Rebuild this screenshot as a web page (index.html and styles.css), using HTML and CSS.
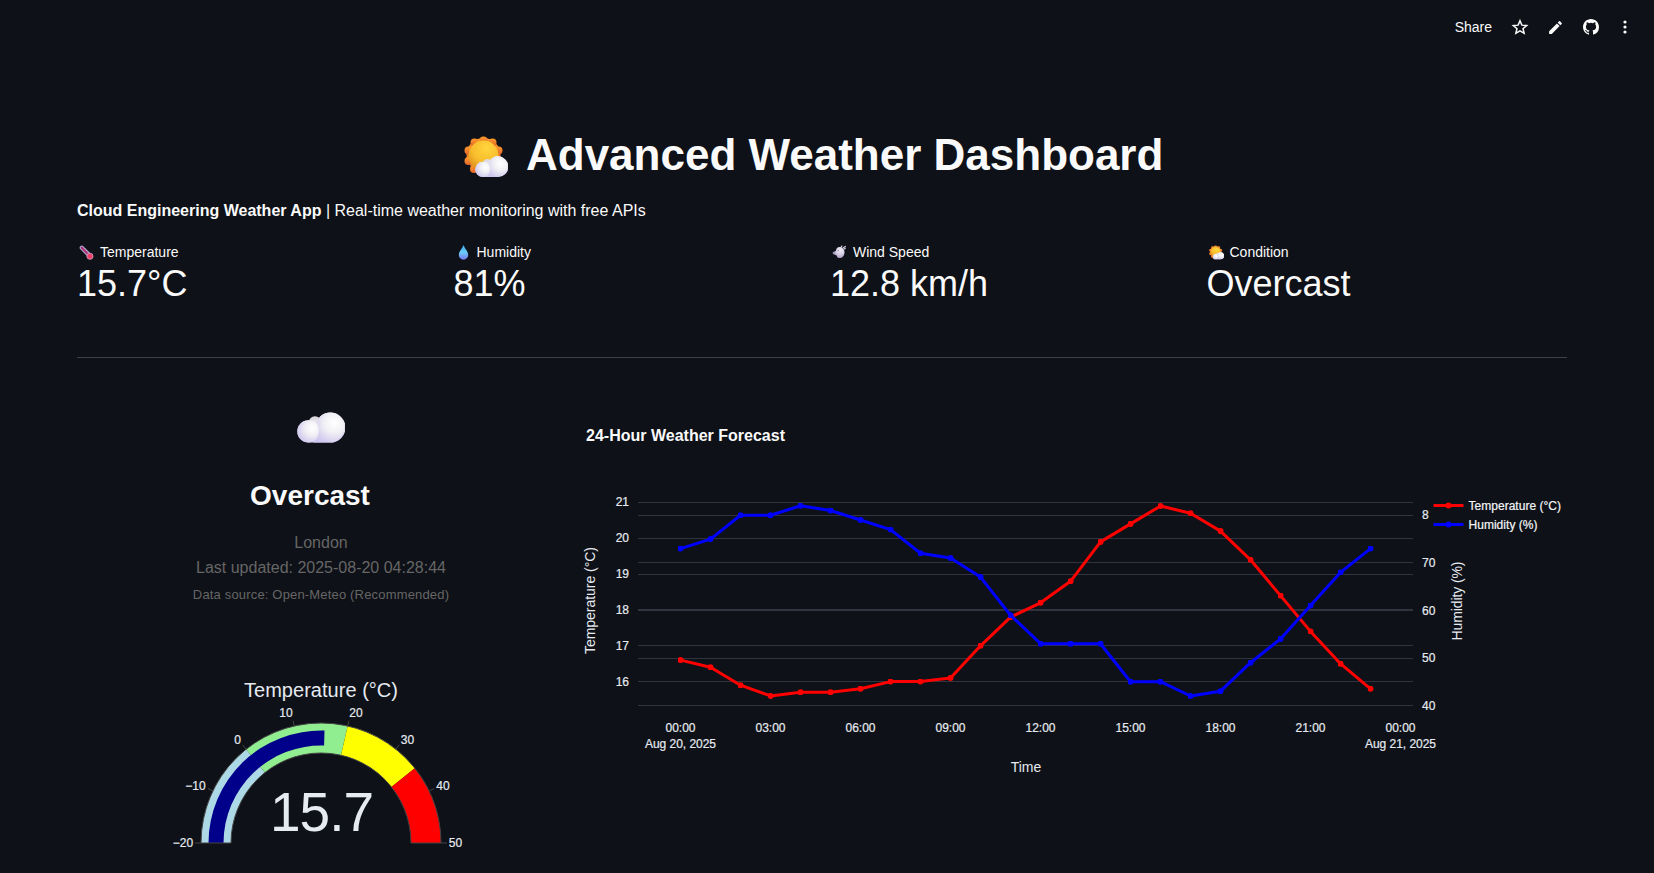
FILE: index.html
```html
<!DOCTYPE html>
<html lang="en">
<head>
<meta charset="utf-8">
<title>Advanced Weather Dashboard</title>
<link rel="stylesheet" href="styles.css">
</head>
<body>
<svg class="defs" width="0" height="0" aria-hidden="true">
  <defs>
    <radialGradient id="sun" cx=".6" cy=".25" r=".8"><stop offset="0" stop-color="#ffd53d"/><stop offset=".6" stop-color="#f8bc2c"/><stop offset="1" stop-color="#d98f1c"/></radialGradient>
    <linearGradient id="rays" x1="0" y1="0" x2="0" y2="1"><stop offset="0" stop-color="#ff9a2b"/><stop offset="1" stop-color="#e2652c"/></linearGradient>
    <linearGradient id="cloudBase" x1="0" y1="0" x2="0" y2="1"><stop offset="0" stop-color="#f4f3f5"/><stop offset=".5" stop-color="#dfdae9"/><stop offset="1" stop-color="#cdc3f2"/></linearGradient>
    <radialGradient id="puff" cx=".68" cy=".35" r=".72"><stop offset="0" stop-color="#ffffff"/><stop offset=".45" stop-color="#f1f0f4"/><stop offset="1" stop-color="#d0c7ee"/></radialGradient>
    <linearGradient id="drop" x1="0" y1="0" x2="0" y2="1"><stop offset="0" stop-color="#3aa5e8"/><stop offset=".5" stop-color="#6ccdf5"/><stop offset="1" stop-color="#7a77ee"/></linearGradient>
    <radialGradient id="wind" cx=".65" cy=".3" r=".8"><stop offset="0" stop-color="#f1edf6"/><stop offset=".5" stop-color="#d3cae0"/><stop offset="1" stop-color="#9b8cb4"/></radialGradient>
    <symbol id="cloud" viewBox="0 0 48 31">
      <circle cx="18" cy="10.500" r="6.200" fill="#dddbe0"/>
      <path d="M11.500 8.300a11 11 0 0 0 0 22.300h22a15 15 0 0 0 0-30.100c-6 0-10.500 3-13 7.500z" fill="url(#cloudBase)"/>
      <circle cx="11.500" cy="19.400" r="11.200" fill="url(#puff)"/>
      <path d="M20 10C22.500 4 27 .5 32.500.5a15 15 0 0 1 0 30.100H16c6-3 7-13 4-20.600z" fill="url(#puff)"/>
    </symbol>
    <symbol id="suncloud" viewBox="0 0 44 42">
      <g fill="url(#rays)"><circle cx="19.500" cy="19" r="17"/><circle cx="19.500" cy="4.500" r="4"/><circle cx="28.500" cy="6.500" r="4"/><circle cx="10.500" cy="6.500" r="4"/><circle cx="34.500" cy="14.500" r="4"/><circle cx="4.500" cy="14.500" r="4"/><circle cx="4.500" cy="25" r="4"/><circle cx="10" cy="33" r="4"/><circle cx="34.500" cy="24" r="4"/></g>
      <circle cx="19.500" cy="19.500" r="15" fill="url(#sun)"/>
      <g transform="translate(11 20) scale(.69)"><circle cx="18" cy="10.500" r="6.200" fill="#dddbe0"/><path d="M11.500 8.300a11 11 0 0 0 0 22.300h22a15 15 0 0 0 0-30.100c-6 0-10.500 3-13 7.500z" fill="url(#cloudBase)"/><circle cx="11.500" cy="19.400" r="11.200" fill="url(#puff)"/><path d="M20 10C22.500 4 27 .5 32.500.5a15 15 0 0 1 0 30.100H16c6-3 7-13 4-20.600z" fill="url(#puff)"/></g>
    </symbol>
  </defs>
</svg>

<header class="toolbar">
  <span class="share">Share</span>
  <svg class="tool star" viewBox="0 0 24 24"><path fill="none" stroke="#fafafa" stroke-width="2" d="M12 3.600l2.500 5.900 6.400.5-4.900 4.200 1.500 6.200-5.500-3.300-5.500 3.300L8 14.200 3.100 10l6.400-.5z"/></svg>
  <svg class="tool pencil" viewBox="0 0 24 24"><path fill="#fafafa" d="M3 17.250V21h3.750L17.810 9.940l-3.750-3.750L3 17.250zM20.710 7.040a1 1 0 0 0 0-1.410l-2.340-2.340a1 1 0 0 0-1.410 0l-1.830 1.830 3.750 3.750 1.830-1.830z"/></svg>
  <svg class="tool github" viewBox="0 0 16 16"><path fill="#fafafa" d="M8 0C3.580 0 0 3.580 0 8c0 3.540 2.290 6.530 5.470 7.590.4.070.55-.17.55-.38 0-.19-.01-.82-.01-1.490-2.010.37-2.530-.49-2.690-.94-.09-.23-.48-.94-.82-1.130-.28-.15-.68-.52-.01-.53.63-.01 1.080.58 1.230.82.72 1.210 1.870.87 2.330.66.07-.52.28-.87.51-1.070-1.780-.2-3.640-.89-3.640-3.950 0-.87.31-1.590.82-2.150-.08-.2-.36-1.020.08-2.120 0 0 .67-.21 2.200.82a7.600 7.600 0 0 1 4 0c1.530-1.040 2.200-.82 2.200-.82.44 1.100.16 1.920.08 2.120.51.56.82 1.270.82 2.150 0 3.070-1.870 3.750-3.650 3.950.29.25.54.73.54 1.480 0 1.070-.01 1.930-.01 2.200 0 .21.15.46.55.38A8 8 0 0 0 16 8c0-4.420-3.580-8-8-8z"/></svg>
  <svg class="tool more" viewBox="0 0 20 20"><g fill="#fafafa"><circle cx="10" cy="5" r="1.600"/><circle cx="10" cy="10" r="1.600"/><circle cx="10" cy="15" r="1.600"/></g></svg>
</header>

<main class="page">
  <h1 class="title"><svg class="title-icon"><use href="#suncloud"/></svg><span class="title-text">Advanced Weather Dashboard</span></h1>
  <p class="subtitle"><strong>Cloud Engineering Weather App</strong> | Real-time weather monitoring with free APIs</p>

  <section class="metrics">
    <div class="metric">
      <div class="label"><svg class="label-icon" viewBox="0 0 16 16"><path d="M3 3l8 8" stroke="#aaa6cf" stroke-width="4.600" stroke-linecap="round"/><path d="M3 3l8 8" stroke="#b02c70" stroke-width="2.300" stroke-linecap="round"/><circle cx="11.700" cy="12" r="3.300" fill="#f04068" stroke="#c9a7cb" stroke-width=".8"/><path d="M6.500 3.500l-1 1M8.500 5.500l-1 1M10.300 7.300l-1 1" stroke="#e6def0" stroke-width=".7"/></svg>Temperature</div>
      <div class="value">15.7°C</div>
    </div>
    <div class="metric">
      <div class="label"><svg class="label-icon" viewBox="0 0 16 16"><path d="M8 0C6.500 4 3 7 3 10.700a5 5 0 0 0 10 0C13 7 9.500 4 8 0z" fill="url(#drop)"/></svg>Humidity</div>
      <div class="value">81%</div>
    </div>
    <div class="metric">
      <div class="label"><svg class="label-icon" viewBox="0 0 16 16"><path d="M5 3.500C7 1.500 10 2 11.500 3.500c2.500 2.500 2.500 6.500 0 9-1 1.500-4 1.800-5.500.8-1-.5-.5-1.800-1.500-2.300L1 9.500l-.3-1.800L4 6.500z" fill="url(#wind)"/><path d="M9.500 2.500l1-1.500M12 3l2.300-1.500M12.700 4.500l1.500-1" stroke="#d8d0ea" stroke-width="1.200" stroke-linecap="round"/><path d="M1 8.400h2.500M6 5.800l1.500.4" stroke="#8e83ad"/></svg>Wind Speed</div>
      <div class="value">12.8 km/h</div>
    </div>
    <div class="metric">
      <div class="label"><svg class="label-icon"><use href="#suncloud"/></svg>Condition</div>
      <div class="value">Overcast</div>
    </div>
  </section>

  <hr class="rule">

  <section class="panels">
    <div class="current">
      <svg class="cloud-icon"><use href="#cloud"/></svg>
      <h3 class="condition">Overcast</h3>
      <p class="meta">London</p>
      <p class="meta updated">Last updated: 2025-08-20 04:28:44</p>
      <p class="source">Data source: Open-Meteo (Recommended)</p>
      <svg class="gauge" viewBox="-160 -180 320 200">
        <g stroke="#444" stroke-width="1">
          <path fill="lightblue" stroke="none" d="M-120 0A120 120 0 0 1-74.800-93.800L-56.100-70.400A90 90 0 0 0-90 0z"/>
          <path fill="lightgreen" stroke="none" d="M-74.800-93.800A120 120 0 0 1 26.700-117L20-87.700A90 90 0 0 0-56.100-70.400z"/>
          <path fill="yellow" stroke="none" d="M26.700-117A120 120 0 0 1 93.800-74.800L70.400-56.100A90 90 0 0 0 20-87.700z"/>
          <path fill="red" stroke="none" d="M93.800-74.800A120 120 0 0 1 120 0H90A90 90 0 0 0 70.400-56.100z"/>
          <path fill="darkblue" stroke="none" d="M-112.500 0A112.500 112.500 0 0 1 3.500-112.400L3.100-97.400A97.500 97.500 0 0 0-97.500 0z"/>
          <path fill="none" d="M-120 0A120 120 0 0 1 120 0H90A90 90 0 0 0-90 0z"/>
          <path d="M-120 0h-6M-108.100-52.100l-4.900-2.300M-74.800-93.800l-3.500-4.400M-26.700-117l-1.200-5.300M26.700-117l1.200-5.300M74.800-93.800l3.500-4.400M108.100-52.100l4.900-2.300M120 0h6"/>
        </g>
        <text class="gauge-title" x="0" y="-146" textLength="154">Temperature (°C)</text>
        <text class="gauge-value" x="1" y="-12" textLength="104">15.7</text>
        <g class="tick">
          <text x="-138" y="4">−20</text><text x="-125.500" y="-53">−10</text><text x="-83.300" y="-99">0</text><text x="-35" y="-126">10</text>
          <text x="35" y="-126">20</text><text x="86.500" y="-99">30</text><text x="122" y="-53">40</text><text x="134.500" y="4">50</text>
        </g>
      </svg>
    </div>

    <svg class="forecast" viewBox="580 400 984 400">
      <defs>
        <marker id="redDot" viewBox="0 0 6 6" refX="3" refY="3" markerWidth="6" markerHeight="6" markerUnits="userSpaceOnUse"><circle cx="3" cy="3" r="3" fill="red"/></marker>
        <marker id="blueDot" viewBox="0 0 6 6" refX="3" refY="3" markerWidth="6" markerHeight="6" markerUnits="userSpaceOnUse"><circle cx="3" cy="3" r="3" fill="blue"/></marker>
      </defs>
      <text class="chart-title" x="586" y="440" textLength="199">24-Hour Weather Forecast</text>
      <path class="grid" d="M638 501.500h775M638 514.500h775M638 537.500h775M638 561.500h775M638 573.500h775M638 608.500h775M638 609.500h775M638 644.500h775M638 657.500h775M638 680.500h775M638 704.500h775"/>
      <polyline class="line temp" points="680.500,659.100 710.500,666.300 740.500,684.200 770.500,694.900 800.500,691.300 830.500,691.300 860.500,687.800 890.500,680.600 920.500,680.600 950.500,677 980.500,644.800 1010.500,616.100 1040.500,601.800 1070.500,580.300 1100.500,540.900 1130.500,522.900 1160.500,505 1190.500,512.200 1220.500,530.100 1250.500,558.800 1280.500,594.600 1310.500,630.400 1340.500,662.700 1370.500,687.800"/>
      <polyline class="line hum" points="680.500,547.600 710.500,538.100 740.500,514.300 770.500,514.300 800.500,504.800 830.500,509.500 860.500,519 890.500,528.600 920.500,552.300 950.500,557.100 980.500,576.100 1010.500,614.200 1040.500,642.700 1070.500,642.700 1100.500,642.700 1130.500,680.700 1160.500,680.700 1190.500,695 1220.500,690.200 1250.500,661.700 1280.500,637.900 1310.500,604.600 1340.500,571.400 1370.500,547.600"/>
      <g class="axis end"><text x="629" y="505">21</text><text x="629" y="541">20</text><text x="629" y="577">19</text><text x="629" y="613">18</text><text x="629" y="649">17</text><text x="629" y="685">16</text></g>
      <g class="axis"><text x="1422" y="518">8</text><text x="1422" y="566">70</text><text x="1422" y="614">60</text><text x="1422" y="661">50</text><text x="1422" y="709">40</text></g>
      <g class="axis mid"><text x="680.500" y="731">00:00</text><text x="680.500" y="747" textLength="71">Aug 20, 2025</text><text x="770.500" y="731">03:00</text><text x="860.500" y="731">06:00</text><text x="950.500" y="731">09:00</text><text x="1040.500" y="731">12:00</text><text x="1130.500" y="731">15:00</text><text x="1220.500" y="731">18:00</text><text x="1310.500" y="731">21:00</text><text x="1400.500" y="731">00:00</text><text x="1400.500" y="747" textLength="71">Aug 21, 2025</text></g>
      <g class="axis-title"><text x="1026" y="771">Time</text><text transform="translate(595.300 599.500) rotate(-90)" textLength="107">Temperature (°C)</text><text transform="translate(1461.500 600) rotate(-90)" textLength="79">Humidity (%)</text></g>
      <path class="key red" d="M1433.500 504.500h30"/><circle cx="1448.500" cy="504.500" r="3" fill="red"/>
      <path class="key blue" d="M1433.500 523.500h30"/><circle cx="1448.500" cy="523.500" r="3" fill="blue"/>
      <g class="legend"><text x="1468.500" y="509" textLength="92.500">Temperature (°C)</text><text x="1468.500" y="528" textLength="69">Humidity (%)</text></g>
    </svg>
  </section>
</main>
</body>
</html>
```

FILE: styles.css
```css
* { box-sizing: border-box; margin: 0; padding: 0; }
html { overflow: hidden; }
body { width: 1654px; height: 873px; overflow: hidden; background: #0e1117; color: #fafafa; font-family: "Liberation Sans", Arial, sans-serif; }
svg { display: block; }
.defs { position: absolute; }

.toolbar { height: 54px; display: flex; align-items: center; justify-content: flex-end; padding-right: 19px; }
.share { font-size: 14px; }
.tool { width: 20px; height: 20px; }
.star { margin-left: 19px; width: 18px; height: 18px; }
.pencil { margin-left: 18px; width: 17px; height: 17px; }
.github { margin-left: 19px; width: 16px; height: 16px; }
.more { margin-left: 16px; }

.page { width: 1567px; padding: 74px 0 0 77px; }
.title { display: flex; align-items: center; padding-left: 387px; height: 53px; font-size: 44px; line-height: 53px; white-space: nowrap; }
.title-icon { width: 44px; height: 42px; margin: 4px 18px 0 0; }
.subtitle { margin-top: 17px; font-size: 16px; line-height: 26px; }

.metrics { display: grid; grid-template-columns: repeat(4, 1fr); gap: 16px; margin-top: 18px; }
.label { display: flex; align-items: center; font-size: 14px; line-height: 21px; padding-left: 2px; }
.label-icon { width: 15px; height: 15px; margin-right: 6px; }
.value { font-size: 36px; line-height: 42px; }

.rule { border: 0; height: 1px; background: #3d4045; margin-top: 52px; }

.panels { display: grid; grid-template-columns: 491px 984px; column-gap: 12px; margin-top: 43px; }
.current { text-align: center; padding: 11px 3px 0 0; }
.cloud-icon { width: 48px; height: 31px; margin: 0 auto; }
.condition { margin-top: 36px; padding-right: 22px; font-size: 28px; line-height: 34px; }
.meta { margin-top: 17px; color: #666; font-size: 16px; line-height: 25px; }
.updated { margin-top: 0; }
.source { margin-top: 4px; color: #666; font-size: 13px; line-height: 21px; letter-spacing: .17px; }
.gauge { width: 320px; height: 200px; margin: 58px auto 0; overflow: visible; }
.gauge text { fill: #e6eaf1; text-anchor: middle; }
.gauge .gauge-title { font-size: 20px; }
.gauge .gauge-value { font-size: 55px; }
.gauge .tick text { font-size: 12px; }

.forecast { width: 984px; height: 400px; overflow: visible; }
.chart-title { font-size: 16px; font-weight: 700; fill: #fafafa; }
.grid { stroke: #31333f; stroke-width: 1; fill: none; }
.line { fill: none; stroke-width: 3; stroke-linejoin: round; }
.temp { stroke: red; marker-start: url(#redDot); marker-mid: url(#redDot); marker-end: url(#redDot); }
.hum { stroke: blue; marker-start: url(#blueDot); marker-mid: url(#blueDot); marker-end: url(#blueDot); }
.key { stroke-width: 3; }
.red { stroke: red; }
.blue { stroke: blue; }
.axis text { font-size: 12px; fill: #e6eaf1; }
.axis text, .legend text, .gauge .tick text { stroke: #e6eaf1; stroke-width: .2px; }
.end text { text-anchor: end; }
.mid text, .axis-title text { text-anchor: middle; }
.axis-title text { font-size: 14px; fill: #e6eaf1; }
.legend text { font-size: 12px; fill: #fafafa; }
```
